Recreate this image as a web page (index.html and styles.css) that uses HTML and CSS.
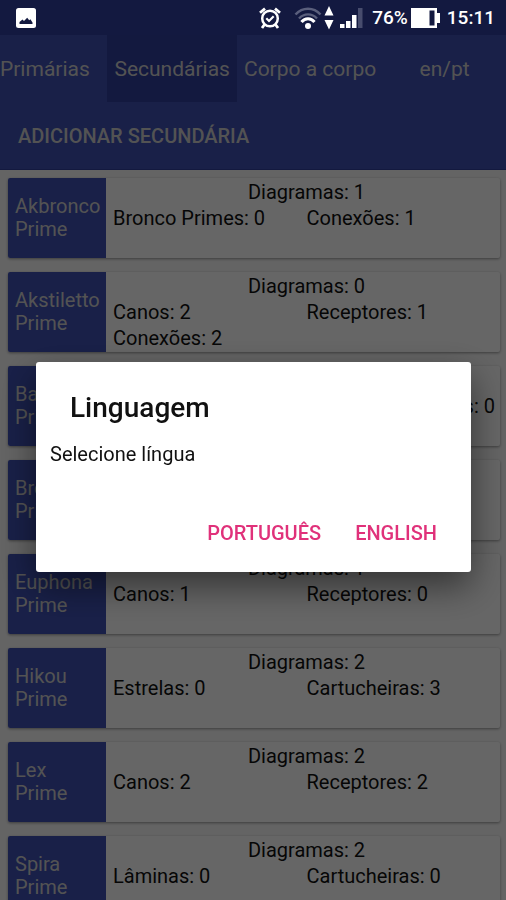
FILE: index.html
```html
<!DOCTYPE html>
<html lang="pt">
<head>
<meta charset="utf-8">
<meta name="viewport" content="width=device-width, initial-scale=1">
<title>Secundárias</title>
<link rel="stylesheet" href="styles.css">
</head>
<body>
<div class="app">
  <header class="status">
    <svg class="icon-picture" width="20" height="20" viewBox="0 0 20 20" aria-hidden="true">
      <rect width="20" height="20" rx="2.5" fill="#fff"/>
      <path d="M3.5 16v-2l3-2.500 1.500 1.500 3.200-3.200 2 2.400 1.200-1 2.100 3.300V16z" fill="#131940"/>
    </svg>
    <div class="status-right">
      <svg width="22" height="22" viewBox="0 0 22 22" fill="none" stroke="#fff" aria-hidden="true">
        <circle cx="11" cy="11.500" r="7.800" stroke-width="2.500"/>
        <path d="M1 5.800 6 1.600M21 5.800 16 1.600M5.500 17.500 3 21M16.500 17.500 19 21" stroke-width="2.800"/>
        <path d="m7.300 11.300 2.700 2.700 4.700-4.700" stroke-width="2.200"/>
      </svg>
      <svg class="icon-wifi" width="28" height="24" viewBox="0 0 28 24" fill="none" aria-hidden="true">
        <path d="M1.500 8.500C8.500.8 19.500.8 26.500 8.500" stroke="#5a5f7c" stroke-width="2.600"/>
        <path d="M5 12.500C10 7 18 7 23 12.500" stroke="#5a5f7c" stroke-width="2.400"/>
        <path d="M7.500 16C11 11.500 17 11.500 20.500 16" stroke="#fff" stroke-width="3"/>
        <circle cx="14" cy="20" r="3" fill="#fff"/>
      </svg>
      <svg class="icon-data" width="10" height="24" viewBox="0 0 10 24" fill="#fff" aria-hidden="true">
        <path d="M5 0 9.500 9.500H.5zM5 23.500 9.500 14H.5z"/>
      </svg>
      <svg class="icon-signal" width="23" height="22" viewBox="0 0 23 22" fill="#fff" aria-hidden="true">
        <path d="M0 17h4.500v4H0zM6 14h4.500v7H6zM12 8h4.500v13H12z"/>
        <path d="M18 1h4.500v20H18z" fill="#474c6d"/>
      </svg>
      <span>76%</span>
      <svg class="icon-battery" width="29" height="20" viewBox="0 0 29 20" aria-hidden="true">
        <path d="M0 0h26v5h3v10h-3v5H0z" fill="#fff"/>
        <path d="M18.500 2.500h5v15h-5z" fill="#131940"/>
      </svg>
      <span>15:11</span>
    </div>
  </header>

  <nav class="tabs">
    <button class="tab tab-first" type="button">Primárias</button>
    <button class="tab tab-selected" type="button">Secundárias</button>
    <button class="tab" type="button">Corpo a corpo</button>
    <button class="tab tab-last" type="button">en/pt</button>
  </nav>
  <div class="toolbar">
    <button class="add" type="button">ADICIONAR SECUNDÁRIA</button>
  </div>

  <main class="list">
    <article class="card">
      <h2 class="name">Akbronco Prime</h2>
      <div class="parts"><span class="blueprint">Diagramas: 1</span><span>Bronco Primes: 0</span><span>Conexões: 1</span></div>
    </article>
    <article class="card">
      <h2 class="name">Akstiletto Prime</h2>
      <div class="parts"><span class="blueprint">Diagramas: 0</span><span>Canos: 2</span><span>Receptores: 1</span><span>Conexões: 2</span></div>
    </article>
    <article class="card">
      <h2 class="name">Baza Prime</h2>
      <div class="parts"><span class="end">Receptores: 0</span></div>
    </article>
    <article class="card">
      <h2 class="name">Bronco Prime</h2>
      <div class="parts"></div>
    </article>
    <article class="card">
      <h2 class="name">Euphona Prime</h2>
      <div class="parts"><span class="blueprint">Diagramas: 1</span><span>Canos: 1</span><span>Receptores: 0</span></div>
    </article>
    <article class="card">
      <h2 class="name">Hikou Prime</h2>
      <div class="parts"><span class="blueprint">Diagramas: 2</span><span>Estrelas: 0</span><span>Cartucheiras: 3</span></div>
    </article>
    <article class="card">
      <h2 class="name">Lex Prime</h2>
      <div class="parts"><span class="blueprint">Diagramas: 2</span><span>Canos: 2</span><span>Receptores: 2</span></div>
    </article>
    <article class="card">
      <h2 class="name">Spira Prime</h2>
      <div class="parts"><span class="blueprint">Diagramas: 2</span><span>Lâminas: 0</span><span>Cartucheiras: 0</span></div>
    </article>
  </main>
</div>

<div class="scrim">
  <section class="dialog" role="dialog" aria-modal="true" aria-labelledby="dialog-title">
    <h1 class="dialog-title" id="dialog-title">Linguagem</h1>
    <p class="dialog-text">Selecione língua</p>
    <div class="dialog-actions">
      <button class="action" type="button">PORTUGUÊS</button>
      <button class="action" type="button">ENGLISH</button>
    </div>
  </section>
</div>
</body>
</html>
```
FILE: styles.css
```css
* {
  box-sizing: border-box;
}

body {
  margin: 0;
  background: #fafafa;
  color: #111;
  font: 20px/26px Roboto, "Liberation Sans", sans-serif;
}

button {
  border: 0;
  padding: 0;
  background: none;
  color: inherit;
  font: inherit;
  white-space: nowrap;
  cursor: pointer;
}

.app {
  display: flex;
  flex-direction: column;
  height: 100vh;
  overflow: hidden;
}

/* The status bar stays lit above the dimmed page. */
.status {
  position: relative;
  z-index: 2;
  display: flex;
  flex: none;
  align-items: center;
  justify-content: space-between;
  height: 35px;
  padding: 0 11px 0 16px;
  background: #131940;
  color: #fff;
  font-size: 19px;
  font-weight: 500;
}

.status-right {
  display: flex;
  align-items: center;
}

.icon-wifi {
  margin-left: 13px;
}

.icon-data {
  margin-left: 2px;
}

.icon-signal {
  margin: 0 9px 0 6px;
}

.icon-battery {
  margin: 0 7px 0 3px;
}

.tabs {
  display: flex;
  flex: none;
  height: 67px;
  background: #3f51b5;
  color: #d0d0d0;
  font-size: 21px;
}

.tab {
  padding: 0 7px;
}

.tab-first {
  flex: 7 1 0;
  padding: 0;
  text-align: left;
}

.tab-last {
  flex: 8 1 0;
  padding: 0;
}

.tab-selected {
  background: #303f9f;
}

.toolbar {
  flex: none;
  height: 68px;
  padding: 0 18px;
  border-bottom: 1px solid #303f9f;
  background: #3f51b5;
  color: #d0d0d0;
}

.add {
  height: 100%;
  font-size: 20px;
  font-weight: 500;
}

.list {
  display: flex;
  flex: 1;
  flex-direction: column;
  gap: 14px;
  min-height: 0;
  padding: 8px 6px 8px 8px;
  overflow: auto;
  scrollbar-width: none;
}

.card {
  display: flex;
  flex: none;
  min-height: 80px;
  border-radius: 2px;
  background: #fff;
  box-shadow: 0 1px 3px rgba(0, 0, 0, 0.4);
}

.name {
  display: flex;
  flex: none;
  align-items: center;
  width: 98px;
  margin: 0;
  padding: 0 7px;
  border-radius: 2px 0 0 2px;
  background: #3f51b5;
  color: #d0d0d0;
  font-size: 20px;
  font-weight: 400;
  line-height: 23px;
}

.parts {
  display: grid;
  flex: 1;
  grid-template-columns: 1fr 1fr;
  grid-auto-rows: 26px;
  padding: 1px 0 0 7px;
}

.blueprint {
  grid-column: 1 / -1;
  text-align: center;
}

.end {
  grid-area: 2 / 2;
  padding-right: 5px;
  text-align: right;
}

.scrim {
  position: fixed;
  inset: 0;
  z-index: 1;
  display: flex;
  align-items: center;
  padding: 34px 35px 0 36px;
  background: rgba(0, 0, 0, 0.6);
}

.dialog {
  width: 100%;
  padding: 30px 17px 19px 14px;
  border-radius: 3px;
  background: #fff;
  box-shadow: 0 14px 36px rgba(0, 0, 0, 0.5);
}

.dialog-title {
  margin: 0 0 17px;
  padding-left: 20px;
  font-size: 28px;
  font-weight: 500;
  line-height: 32px;
}

.dialog-text {
  margin: 0 0 46px;
}

.dialog-actions {
  display: flex;
  justify-content: flex-end;
}

.action {
  height: 40px;
  padding: 0 17px;
  color: #e0317a;
  font-weight: 500;
}
```
